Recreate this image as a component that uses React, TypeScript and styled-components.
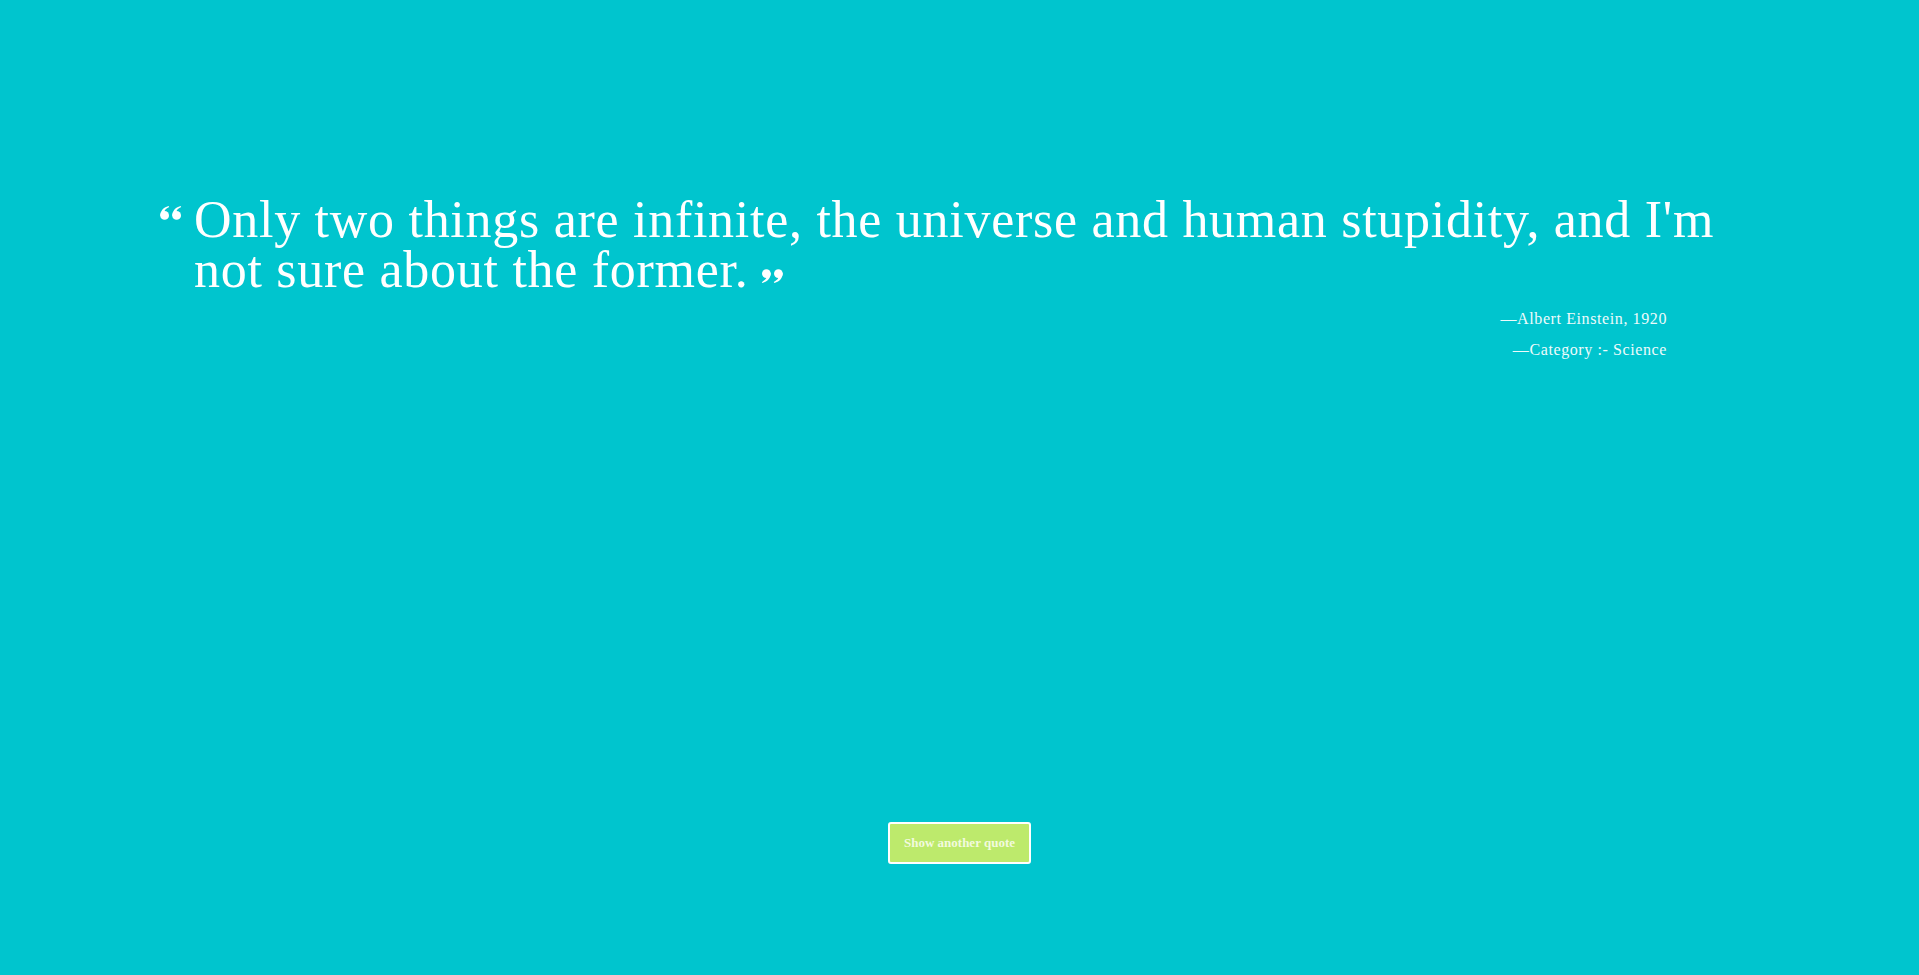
import React from "react";
import styled, { createGlobalStyle } from "styled-components";

const GlobalStyle = createGlobalStyle`
  html, body {
    margin: 0;
    padding: 0;
    background: #00c5ce;
  }
  * { box-sizing: border-box; }
`;

const Page = styled.main`
  min-height: 100vh;
  height: 975px;
  display: flex;
  flex-direction: column;
  background: #00c5ce;
  color: #ffffff;
  font-family: "Liberation Serif", "DejaVu Serif", serif;
  padding: 195px 160px 111px;
`;

const Figure = styled.figure`
  margin: 0;
  display: flex;
  flex-direction: column;
`;

const QuoteRow = styled.blockquote`
  margin: 0;
  display: flex;
  align-items: flex-start;
  gap: 12px;
`;

const QuoteText = styled.p`
  margin: 0;
  flex: 1;
  font-size: 52px;
  line-height: 50px;
  letter-spacing: 0.72px;
  font-weight: 400;
`;

const Mark = styled.svg<{ $flip?: boolean }>`
  flex: none;
  width: 22px;
  height: 14px;
  fill: #ffffff;
  transform: ${(p) => (p.$flip ? "rotate(180deg)" : "none")};
`;

const OpenMark = styled(Mark)`
  margin-top: 11px;
`;

const CloseMark = styled(Mark)`
  display: inline-block;
  margin-left: 13px;
  vertical-align: 4px;
`;

const Caption = styled.figcaption`
  margin: 15px 92px 0 0;
  display: flex;
  flex-direction: column;
  align-items: flex-end;
  gap: 13px;
  font-size: 16px;
  line-height: 18px;
  letter-spacing: 0.6px;
  color: #eefbfc;
`;

const ButtonBar = styled.div`
  margin-top: auto;
  display: flex;
  justify-content: center;
`;

const NextButton = styled.button`
  height: 42px;
  padding: 0 14px;
  background: #bdea6c;
  border: 2px solid #ffffff;
  border-radius: 3px;
  color: #f3fadf;
  font-family: "Liberation Serif", "DejaVu Serif", serif;
  font-weight: 700;
  font-size: 13px;
  cursor: pointer;
`;

function QuoteGlyph({ flip, as: Comp }: { flip?: boolean; as: typeof OpenMark }) {
  return (
    <Comp $flip={flip} viewBox="0 0 22 14" aria-hidden="true">
      <circle cx="4.6" cy="9.4" r="4.4" />
      <path d="M0.3 10 C0.2 5.2 3 1.6 8.6 0 L9.2 1.1 C5.8 2.6 4.2 4.8 4.4 6.4 Z" />
      <circle cx="16.6" cy="9.4" r="4.4" />
      <path d="M12.3 10 C12.2 5.2 15 1.6 20.6 0 L21.2 1.1 C17.8 2.6 16.2 4.8 16.4 6.4 Z" />
    </Comp>
  );
}

export default function App() {
  return (
    <>
      <GlobalStyle />
      <Page>
        <Figure>
          <QuoteRow>
            <QuoteGlyph as={OpenMark} />
            <QuoteText>
              Only two things are infinite, the universe and human stupidity, and I'm not sure
              about the former.
              <QuoteGlyph as={CloseMark} flip />
            </QuoteText>
          </QuoteRow>
          <Caption>
            <span>—Albert Einstein, 1920</span>
            <span>—Category :- Science</span>
          </Caption>
        </Figure>
        <ButtonBar>
          <NextButton type="button">Show another quote</NextButton>
        </ButtonBar>
      </Page>
    </>
  );
}
